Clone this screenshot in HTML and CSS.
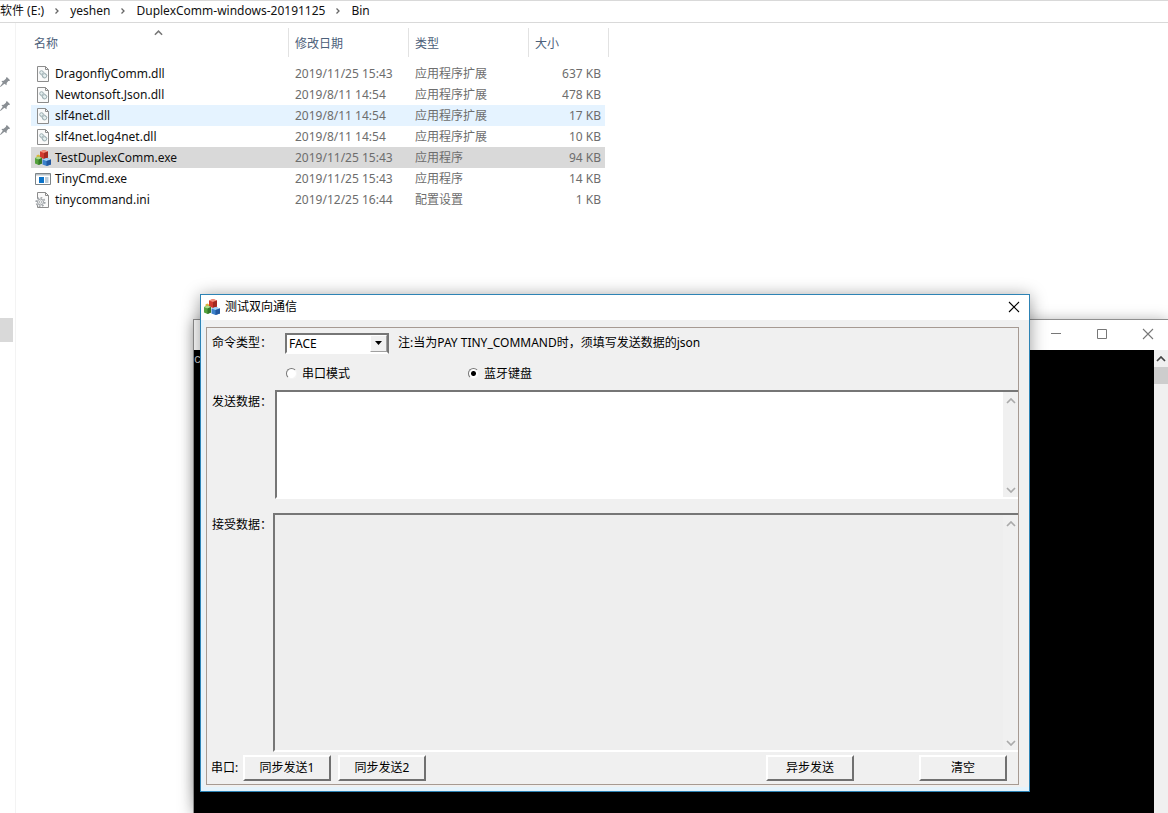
FILE: index.html
```html
<!DOCTYPE html>
<html lang="zh-CN">
<head>
<meta charset="utf-8">
<title>测试双向通信</title>
<link rel="stylesheet" href="styles.css">
</head>
<body>
<svg class="defs" aria-hidden="true">
  <symbol id="pin" viewBox="0 0 12 12"><path d="M7.500.5l3.500 3.500-1 1-1-.2L7.300 7l-.2 2.500L4.800 8 .5 11.500 0 11l3-4.300L1.500 5 4 4.500 6.500 2.500v-1z" fill="#8a8f94"/></symbol>
  <symbol id="dll" viewBox="0 0 16 16"><path d="M2.500.5h8l3 3v12h-11z" fill="#fafafa" stroke="#8c8c8c"/><path d="M10.500.5v3h3" fill="none" stroke="#8c8c8c"/><circle cx="6.500" cy="6.500" r="1.800" fill="#e4eeee" stroke="#9fb0b4"/><circle cx="9.500" cy="9.800" r="2.200" fill="#e4eeee" stroke="#9fb0b4"/><path d="M5 7.500l4.500 4.500M8 5.500l4 4" stroke="#9fb0b4" stroke-width=".8"/></symbol>
  <symbol id="ini" viewBox="0 0 16 16"><path d="M2.500.5h8l3 3v12h-11z" fill="#fafafa" stroke="#8c8c8c"/><path d="M10.500.5v3h3" fill="none" stroke="#8c8c8c"/><circle cx="5.500" cy="10" r="4.300" fill="#fafafa" stroke="#a2a6aa" stroke-width="1.600" stroke-dasharray="1.800 1.500"/><circle cx="5.500" cy="10" r="3" fill="#eee" stroke="#9a9fa4"/><circle cx="5.500" cy="10" r="1.200" fill="#fff" stroke="#9a9fa4" stroke-width=".7"/></symbol>
  <symbol id="cmd" viewBox="0 0 16 16"><path d="M.5 2.500h15v11H.5z" fill="#fff" stroke="#7d8488"/><path d="M1 3h14v1.500H1z" fill="#b8c1c7"/><path d="M4 6h5v6H4z" fill="#0c73c9"/><path d="M10 7h3.500M10 9h3.500M10 11h3.500" stroke="#7797b2"/></symbol>
  <symbol id="mfc" viewBox="0 0 16 16"><path d="M5 1.500L9 0l4 1.500v6L9 9 5 7.500z" fill="#d13b2e"/><path d="M5 1.500L9 0l4 1.500L9 3z" fill="#f2907c"/><path d="M9 3l4-1.500v6L9 9z" fill="#a32a20"/><path d="M1.500 5.500l1.800-1 1.700 1V8H1.500z" fill="#e2b33a"/><path d="M0 8l3.500-1.500L7 8v5.500L3.500 15 0 13.500z" fill="#55a33d"/><path d="M0 8l3.500-1.500L7 8 3.500 9.500z" fill="#b0dc91"/><path d="M3.500 9.500L7 8v5.500L3.500 15z" fill="#36782a"/><path d="M7.500 9.500l4-1.500 4.500 1.500v5L11.500 16l-4-1.500z" fill="#3c82cc"/><path d="M7.500 9.500l4-1.500L16 9.500 11.500 11z" fill="#a9d4f5"/><path d="M11.500 11L16 9.500v5L11.500 16z" fill="#23589f"/></symbol>
  <symbol id="up" viewBox="0 0 10 6"><path d="M1 5l4-4 4 4" fill="none" stroke="currentColor" stroke-width="1.700"/></symbol>
  <symbol id="down" viewBox="0 0 10 6"><path d="M1 1l4 4 4-4" fill="none" stroke="currentColor" stroke-width="1.700"/></symbol>
  <symbol id="crumb" viewBox="0 0 6 8"><path d="M1.500 1.500L4 4 1.500 6.500" fill="none" stroke="#666" stroke-width="1.300"/></symbol>
  <symbol id="close" viewBox="0 0 12 12"><path d="M1 1l10 10M11 1L1 11" fill="none" stroke="currentColor" stroke-width="1.100"/></symbol>
</svg>

<main class="explorer">
  <nav class="address" aria-label="路径">
    <span>软件 (E:)</span><svg class="crumb"><use href="#crumb"/></svg>
    <span>yeshen</span><svg class="crumb"><use href="#crumb"/></svg>
    <span>DuplexComm-windows-20191125</span><svg class="crumb"><use href="#crumb"/></svg>
    <span>Bin</span>
  </nav>
  <div class="content">
    <aside class="sidebar">
      <svg class="pin"><use href="#pin"/></svg>
      <svg class="pin"><use href="#pin"/></svg>
      <svg class="pin"><use href="#pin"/></svg>
      <div class="current"></div>
    </aside>
    <table class="files">
      <colgroup><col class="c-name"><col class="c-col"><col class="c-col"><col class="c-size"></colgroup>
      <thead><tr><th>名称<svg class="sort"><use href="#up"/></svg></th><th>修改日期</th><th>类型</th><th>大小</th></tr></thead>
      <tbody>
        <tr><td><div class="file"><svg class="icon"><use href="#dll"/></svg>DragonflyComm.dll</div></td><td>2019/11/25 15:43</td><td>应用程序扩展</td><td>637 KB</td></tr>
        <tr><td><div class="file"><svg class="icon"><use href="#dll"/></svg>Newtonsoft.Json.dll</div></td><td>2019/8/11 14:54</td><td>应用程序扩展</td><td>478 KB</td></tr>
        <tr class="hover"><td><div class="file"><svg class="icon"><use href="#dll"/></svg>slf4net.dll</div></td><td>2019/8/11 14:54</td><td>应用程序扩展</td><td>17 KB</td></tr>
        <tr><td><div class="file"><svg class="icon"><use href="#dll"/></svg>slf4net.log4net.dll</div></td><td>2019/8/11 14:54</td><td>应用程序扩展</td><td>10 KB</td></tr>
        <tr class="selected"><td><div class="file"><svg class="icon"><use href="#mfc"/></svg>TestDuplexComm.exe</div></td><td>2019/11/25 15:43</td><td>应用程序</td><td>94 KB</td></tr>
        <tr><td><div class="file"><svg class="icon"><use href="#cmd"/></svg>TinyCmd.exe</div></td><td>2019/11/25 15:43</td><td>应用程序</td><td>14 KB</td></tr>
        <tr><td><div class="file"><svg class="icon"><use href="#ini"/></svg>tinycommand.ini</div></td><td>2019/12/25 16:44</td><td>配置设置</td><td>1 KB</td></tr>
      </tbody>
    </table>
  </div>
</main>

<section class="console" aria-label="控制台">
  <header class="console-title">
    <button class="win-btn" aria-label="最小化"><svg viewBox="0 0 12 12"><path d="M1 5.500h10" stroke="currentColor"/></svg></button>
    <button class="win-btn" aria-label="最大化"><svg viewBox="0 0 12 12"><path d="M1.500 1.500h9v9h-9z" fill="none" stroke="currentColor"/></svg></button>
    <button class="win-btn" aria-label="关闭"><svg><use href="#close"/></svg></button>
  </header>
  <div class="console-body">
    <pre class="output">c</pre>
    <div class="console-scroll"><svg class="arrow"><use href="#up"/></svg><div class="thumb"></div></div>
  </div>
</section>

<section class="dialog" role="dialog" aria-labelledby="dialog-title">
  <header class="dialog-title">
    <svg class="icon"><use href="#mfc"/></svg>
    <h1 id="dialog-title">测试双向通信</h1>
    <button class="dialog-close" aria-label="关闭"><svg><use href="#close"/></svg></button>
  </header>
  <form class="panel">
    <div class="row command">
      <label class="label" for="type">命令类型：</label>
      <div class="combo">
        <select id="type"><option>FACE</option><option>PAY</option><option>TINY_COMMAND</option></select>
        <span class="drop"><svg viewBox="0 0 7 4"><path d="M0 0h7L3.500 4z"/></svg></span>
      </div>
      <span class="note">注:当为PAY TINY_COMMAND时，须填写发送数据的json</span>
    </div>
    <div class="row modes">
      <label class="mode"><input type="radio" name="mode">串口模式</label>
      <label class="mode"><input type="radio" name="mode" checked>蓝牙键盘</label>
    </div>
    <div class="row send">
      <label class="label" for="send">发送数据：</label>
      <div class="box">
        <textarea id="send"></textarea>
        <div class="scroll"><svg class="arrow"><use href="#up"/></svg><svg class="arrow"><use href="#down"/></svg></div>
      </div>
    </div>
    <div class="row receive">
      <label class="label" for="receive">接受数据：</label>
      <div class="box">
        <textarea id="receive" readonly></textarea>
        <div class="scroll"><svg class="arrow"><use href="#up"/></svg><svg class="arrow"><use href="#down"/></svg></div>
      </div>
    </div>
    <div class="row actions">
      <span class="port">串口:</span>
      <button type="button" class="btn">同步发送1</button>
      <button type="button" class="btn">同步发送2</button>
      <button type="button" class="btn async">异步发送</button>
      <button type="reset" class="btn clear">清空</button>
    </div>
  </form>
</section>
</body>
</html>
```
FILE: styles.css
```css
* { box-sizing: border-box; }
body {
  margin: 0;
  min-height: 100vh;
  position: relative;
  display: flex;
  overflow: hidden;
  background: #fff;
  color: #111;
  font: 12px/20px "Noto Sans", "Noto Sans CJK SC", sans-serif;
}
button, select, textarea { font: inherit; color: inherit; }
.defs { position: absolute; width: 0; height: 0; }
.icon { width: 16px; height: 16px; flex: none; }

/* File explorer */
.explorer { flex: 1; display: flex; flex-direction: column; }
.address {
  display: flex;
  align-items: center;
  gap: 10px;
  height: 23px;
  padding-bottom: 2px;
  border-top: 1px solid #d9d9d9;
  border-bottom: 1px solid #d9d9d9;
  white-space: nowrap;
}
.crumb { width: 6px; height: 8px; }
.content { flex: 1; display: flex; }
.sidebar { width: 16px; padding-top: 53px; border-right: 1px solid #f3f3f3; }
.pin { display: block; width: 11px; height: 12px; margin-bottom: 12px; }
.current { width: 13px; height: 24px; margin-top: 182px; background: #d9d9d9; }
.files {
  align-self: flex-start;
  width: 574px;
  margin: 5px 0 0 15px;
  table-layout: fixed;
  border-collapse: separate;
  border-spacing: 0;
  color: #6d6d6d;
}
.c-name { width: 257px; }
.c-col { width: 120px; }
.c-size { width: 77px; }
th {
  position: relative;
  height: 29px;
  padding: 2px 6px 0;
  border-left: 1px solid #e2e2e2;
  color: #4c607a;
  font-weight: 400;
  text-align: left;
}
th:first-child { border-left: 0; padding-left: 3px; }
th:last-child::after { content: ""; position: absolute; top: 0; right: -4px; height: 29px; border-right: 1px solid #e2e2e2; }
tbody::before { content: ""; display: block; height: 6px; }
.sort { position: absolute; left: 123px; top: 2px; width: 9px; height: 6px; color: #777; }
td { height: 21px; padding: 0 0 0 7px; white-space: nowrap; }
td:first-child { padding-left: 4px; color: #111; }
td:last-child { text-align: right; padding-right: 4px; }
.file { display: flex; align-items: center; gap: 4px; }
.hover { background: #e5f3ff; }
.selected { background: #d9d9d9; }

/* Console window */
.console {
  position: absolute;
  inset: 319px 0 0 193px;
  display: flex;
  flex-direction: column;
  border: solid #8f8f8f;
  border-width: 1px 0 0 1px;
  background: #fff;
  box-shadow: 0 2px 14px rgba(0, 0, 0, .35);
}
.console-title { display: flex; justify-content: flex-end; height: 30px; padding: 0 4px 2px 0; color: #777; }
.win-btn { display: grid; place-items: center; width: 32px; margin-left: 14px; padding: 0; border: 0; background: none; }
.win-btn svg { width: 12px; height: 12px; fill: none; }
.console-body { flex: 1; display: flex; background: #000; }
.output { flex: 1; margin: 0; font: 12px/20px "Liberation Mono", monospace; color: #ccc; }
.console-scroll { width: 14px; padding-top: 6px; background: #f0f0f0; color: #444; text-align: center; line-height: 0; }
.console-scroll .arrow { width: 10px; height: 6px; }
.thumb { height: 17px; margin-top: 5px; background: #cdcdcd; }

/* Dialog window */
.dialog {
  position: absolute;
  inset: 294px 138px auto 200px;
  padding: 0 10px 6px 5px;
  border: 1px solid #2d83b5;
  background: #f0f0f0;
  color: #000;
  box-shadow: 0 2px 16px rgba(0, 0, 0, .4), inset 0 -4px 0 #e4f3fc, inset 3px 0 0 #e4f3fc;
}
.dialog-title { display: flex; align-items: center; gap: 5px; height: 25px; margin: 0 -10px 7px -5px; padding: 0 9px 2px 3px; background: #fff; }
.dialog-title h1 { flex: 1; margin: 0; font: inherit; }
.dialog-close { display: grid; place-items: center; width: 12px; padding: 0; border: 0; background: none; }
.dialog-close svg { width: 12px; height: 12px; }
.panel { display: flex; flex-direction: column; border: 1px solid #a69a92; }
.row { display: flex; padding-left: 5px; }
.label { flex: none; width: 62px; white-space: nowrap; }
.command { height: 30px; align-items: center; }
.combo { position: relative; width: 104px; height: 21px; margin-left: 11px; border: 2px solid; border-color: #767676 #767676 #fff #767676; background: #fff; }
.combo select { display: block; appearance: none; width: 100%; height: 17px; padding: 0 18px 0 2px; border: 0; outline: 0; background: #fff; line-height: 17px; }
.drop { position: absolute; inset: 0 0 0 auto; width: 17px; display: grid; place-items: center; border: 1px solid; border-color: #fff #a0a0a0 #a0a0a0 #fff; background: #f0f0f0; pointer-events: none; }
.drop svg { width: 7px; height: 4px; }
.note { margin-left: 9px; white-space: nowrap; }
.modes { height: 32px; padding-left: 79px; align-items: center; }
.mode { display: flex; align-items: center; gap: 5px; width: 182px; }
.mode input { appearance: none; width: 11px; height: 11px; margin: 0 0 2px; border: 1px solid; border-color: #777 #f4f4f4 #f4f4f4 #777; border-radius: 50%; background: #fff; }
.mode input:checked { background: radial-gradient(circle, #000 2px, #fff 3px); }
.box { flex: 1; display: flex; border: solid; border-width: 2px 0 2px 2px; border-color: #767676 #f0f0f0 #fff #767676; background: #fff; }
.box textarea { flex: 1; min-width: 0; padding: 2px; border: 0; outline: 0; resize: none; overflow: hidden; background: none; }
.scroll { width: 15px; padding: 6px 2px 4px; display: flex; flex-direction: column; justify-content: space-between; align-items: center; background: #f0f0f0; color: #aaa; }
.scroll .arrow { width: 10px; height: 6px; }
.send { height: 109px; }
.send .label, .receive .label { padding-top: 2px; }
.send .box { margin-left: 1px; }
.receive { height: 239px; margin-top: 14px; }
.receive .box { background: #eee; }
.receive .label { width: 61px; }
.actions { height: 32px; align-items: center; padding: 0 11px 0 4px; }
.port { width: 32px; }
.btn { width: 88px; height: 26px; padding: 0; border: 2px solid; border-color: #fff #707070 #707070 #fff; background: #f0f0f0; }
.btn + .btn { margin-left: 7px; }
.actions .async { margin-left: auto; }
.actions .clear { margin-left: 65px; }
```
